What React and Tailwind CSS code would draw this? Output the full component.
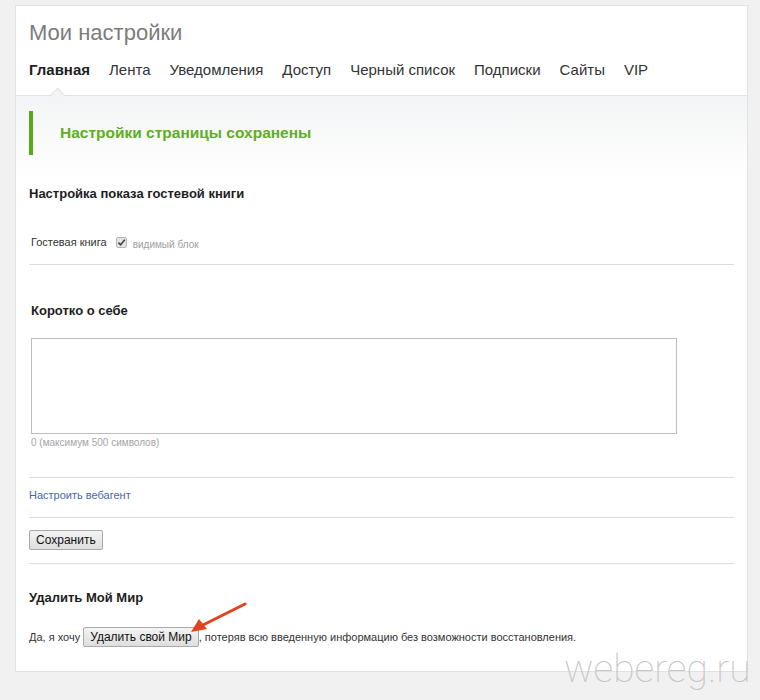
import { useState } from "react";

const tabs = ["Главная", "Лента", "Уведомления", "Доступ", "Черный список", "Подписки", "Сайты", "VIP"];

function Divider({ className = "" }) {
  return <div className={`h-px bg-[#dcdcdc] ${className}`} />;
}

function OldButton({ children }) {
  return (
    <button className="h-[20px] rounded-[2px] border border-[#a9a9a9] bg-linear-to-b from-[#f4f4f4] to-[#dedede] px-[6px] text-[12px] leading-none text-[#111]">
      {children}
    </button>
  );
}

export default function App() {
  const [about, setAbout] = useState("");
  const [visible, setVisible] = useState(true);

  return (
    <div className="relative min-h-[700px] overflow-hidden bg-[#f1f1f1] pt-[5px] font-['Liberation_Sans',Arial,sans-serif]">
      <div className="relative ml-[15px] h-[667px] w-[733px] border border-[#e2e2e2] bg-white">
        {/* header */}
        <div className="relative h-[90px] border-b border-[#e3e3e3] px-[13px]">
          <h1 className="pt-[14px] text-[22px] leading-[26px] font-normal text-[#7c7c7c]">Мои настройки</h1>
          <nav className="mt-[15px] flex gap-[19px] text-[15px] leading-[18px] text-[#333]">
            {tabs.map((t, i) => (
              <span key={t} className={i === 0 ? "font-bold text-[#1e1e1e]" : ""}>
                {t}
              </span>
            ))}
          </nav>
          <span className="absolute -bottom-[6px] left-[36px] h-[11px] w-[11px] rotate-45 border-t border-l border-[#e3e3e3] bg-[#f3f4f5]" />
        </div>

        <div className="bg-[linear-gradient(to_bottom,#f3f4f5,#ffffff_80px)] px-[13px] pt-[15px] pb-[10px]">
          <div className="flex h-[44px] items-center border-l-4 border-[#58a81c] pl-[27px]">
            <span className="text-[15.5px] font-bold text-[#5fae22]">Настройки страницы сохранены</span>
          </div>

          <h2 className="mt-[30px] text-[13px] leading-[18px] font-bold text-[#1d1d1d]">Настройка показа гостевой книги</h2>

          <div className="mt-[29px] ml-[2px] flex h-[20px] items-center">
            <span className="text-[11px] text-[#333]">Гостевая книга</span>
            <button
              onClick={() => setVisible(!visible)}
              className="ml-[9px] flex h-[11px] w-[11px] items-center justify-center rounded-[2px] border border-[#b5b5b5] bg-[#e4e4e4]"
            >
              {visible && (
                <svg viewBox="0 0 10 10" className="h-[9px] w-[9px]">
                  <path d="M1.5 5.2 L4 7.6 L8.6 2" fill="none" stroke="#444" strokeWidth="1.8" />
                </svg>
              )}
            </button>
            <span className="ml-[6px] mt-[4px] text-[10px] text-[#a0a0a0]">видимый блок</span>
          </div>

          <Divider className="mt-[12px]" />

          <h2 className="mt-[37px] ml-[2px] text-[13px] leading-[18px] font-bold text-[#1d1d1d]">Коротко о себе</h2>

          <textarea
            value={about}
            onChange={(e) => setAbout(e.target.value.slice(0, 500))}
            className="mt-[18px] ml-[2px] block h-[96px] w-[646px] resize-none border border-[#bdbdbd] bg-white outline-none"
          />
          <div className="mt-[2px] ml-[2px] text-[10px] leading-[14px] text-[#a5a5a5]">
            {about.length} (максимум 500 символов)
          </div>

          <Divider className="mt-[27px]" />

          <a href="#" className="mt-[9px] block text-[11px] leading-[16px] text-[#4667a6]">
            Настроить вебагент
          </a>

          <Divider className="mt-[14px]" />

          <div className="mt-[12px] flex">
            <OldButton>Сохранить</OldButton>
          </div>

          <Divider className="mt-[13px]" />

          <h2 className="mt-[25px] text-[13px] leading-[18px] font-bold text-[#1d1d1d]">Удалить Мой Мир</h2>

          <div className="mt-[20px] flex h-[20px] items-center text-[11px] text-[#333]">
            <span>Да, я хочу&nbsp;</span>
            <OldButton>Удалить свой Мир</OldButton>
            <span>, потеряв всю введенную информацию без возможности восстановления.</span>
          </div>
        </div>

        {/* red annotation arrow */}
        <svg className="absolute left-[165px] top-[592px] h-[40px] w-[70px]" viewBox="0 0 70 40">
          <path d="M64 6 L22 27" stroke="#e0441e" strokeWidth="3" strokeLinecap="round" fill="none" />
          <path d="M10 34 L18 21 L26 31 Z" fill="#e0441e" />
        </svg>
      </div>

      <div className="absolute left-[564px] top-[650px] font-['Roboto',sans-serif] text-[39px] leading-none font-thin text-[#c4c4c4]">
        webereg.ru
      </div>
    </div>
  );
}
